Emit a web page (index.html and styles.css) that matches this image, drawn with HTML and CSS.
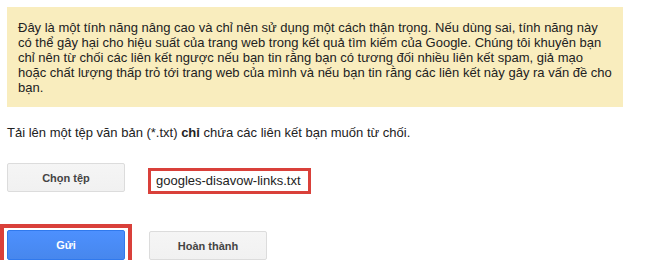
FILE: index.html
```html
<!DOCTYPE html>
<html>
<head>
    <meta charset="utf-8">
    <link rel="stylesheet" href="styles.css">
</head>
<body>
    <div class="page">
        <div class="notice">
            Đây là một tính năng nâng cao và chỉ nên sử dụng một cách thận trọng. Nếu dùng sai, tính năng này
            có thể gây hại cho hiệu suất của trang web trong kết quả tìm kiếm của Google. Chúng tôi khuyên bạn
            chỉ nên từ chối các liên kết ngược nếu bạn tin rằng bạn có tương đối nhiều liên kết spam, giả mạo
            hoặc chất lượng thấp trỏ tới trang web của mình và nếu bạn tin rằng các liên kết này gây ra vấn đề cho
            bạn.
        </div>

        <p class="hint">Tải lên một tệp văn bản (*.txt) <strong>chỉ</strong> chứa các liên kết bạn muốn từ chối.</p>

        <div class="file-row">
            <button class="btn">Chọn tệp</button>
            <span class="file-name">googles-disavow-links.txt</span>
        </div>

        <div class="actions">
            <span class="highlight">
                <button class="btn btn-primary">Gửi</button>
            </span>
            <button class="btn">Hoàn thành</button>
        </div>
    </div>
</body>
</html>
```

FILE: styles.css
```css
body {
    margin: 0;
    font-family: Arial, "Liberation Sans", sans-serif;
    font-size: 13px;
    color: #222;
    background: #fff;
}

.page {
    padding: 7px 0 0 7px;
}

.notice {
    width: 594px;
    padding: 13px 11px 12px 11px;
    line-height: 15px;
    background-color: #f9edbe;
}

.hint {
    margin: 18px 0 0 0;
    line-height: 15px;
}

.file-row {
    display: flex;
    align-items: flex-start;
    gap: 23px;
    margin-top: 23px;
}

.actions {
    display: flex;
    align-items: flex-start;
    gap: 24px;
    margin-top: 37px;
}

.btn {
    width: 118px;
    height: 29px;
    padding: 0;
    font-family: Arial, "Liberation Sans", sans-serif;
    font-size: 11px;
    font-weight: bold;
    color: #444;
    background: linear-gradient(#f5f5f5, #f1f1f1);
    border: 1px solid #dcdcdc;
    border-radius: 2px;
    cursor: pointer;
}

.btn-primary {
    height: 30px;
    color: #fff;
    background: linear-gradient(#4d90fe, #4787ed);
    border-color: #3079ed;
}

.highlight {
    display: block;
    margin: -7px;
    padding: 2px 3px 3px 3px;
    border: 4px solid #d9403a;
    line-height: 0;
}

.file-name {
    display: block;
    margin-top: 5px;
    width: 152px;
    height: 20px;
    padding: 0 0 0 5px;
    line-height: 20px;
    border: 3px solid #d9403a;
    color: #222;
}
```
